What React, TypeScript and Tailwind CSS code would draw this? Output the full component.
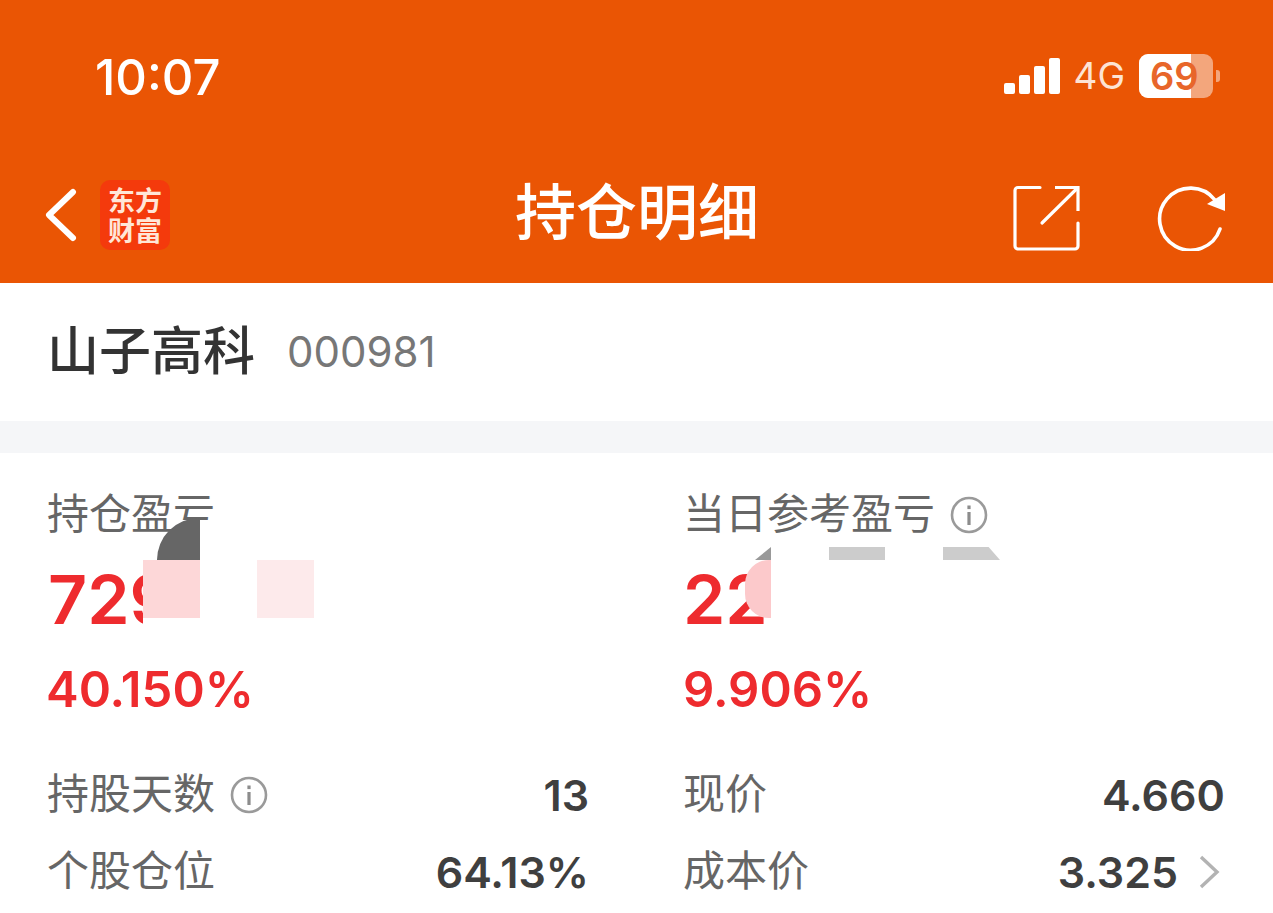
import React from 'react';

const CJK = "font-['Liberation_Sans','Noto_Sans_CJK_SC',sans-serif]";

function InfoIcon({ size = 38 }: { size?: number }) {
  return (
    <svg width={size} height={size} viewBox="0 0 38 38" fill="none" className="shrink-0">
      <circle cx="19" cy="19" r="17" stroke="#9a9a9a" strokeWidth="2.6" />
      <rect x="17.4" y="16" width="3.2" height="13" fill="#8c8c8c" />
      <rect x="17.4" y="9.5" width="3.2" height="3.6" fill="#8c8c8c" />
    </svg>
  );
}

function StatusBar() {
  return (
    <div className="h-[153px] flex items-start justify-between pl-[95px] pr-[53px] pt-[49px]">
      <span className="font-['Inter',sans-serif] text-[49px] leading-[58px] font-medium text-white">10:07</span>
      <div className="flex items-center -mt-[2px] pt-[7px]">
        <div className="flex items-end gap-[4px] h-[36px]">
          <div className="w-[11px] h-[11px] bg-white rounded-[2px]" />
          <div className="w-[11px] h-[19px] bg-white rounded-[2px]" />
          <div className="w-[11px] h-[28px] bg-white rounded-[2px]" />
          <div className="w-[11px] h-[36px] bg-white rounded-[2px]" />
        </div>
        <span className="ml-[13px] font-['Inter',sans-serif] text-[37px] leading-[44px] text-[#fde3d4]">4G</span>
        <div className="ml-[14px] relative w-[74px] h-[44px] rounded-[9px] bg-[#f3a67c]">
          <div className="absolute left-0 top-0 bottom-0 w-[52px] bg-white rounded-l-[9px]" />
          <span className="absolute left-[11px] top-0 font-['Inter',sans-serif] font-semibold text-[38px] leading-[44px] text-[#e8662a]">69</span>
        </div>
        <div className="ml-[3px] w-[4px] h-[12px] rounded-r-[3px] bg-[#f3a67c]" />
      </div>
    </div>
  );
}

function NavBar() {
  return (
    <div className="h-[130px] flex items-start justify-between pl-[44px] pr-[48px] pt-[25px]">
      <div className="flex items-start">
        <svg width="34" height="54" viewBox="0 0 34 54" fill="none" className="mt-[10px]">
          <path d="M29 4 L5 27 L29 50" stroke="white" strokeWidth="6" strokeLinecap="round" strokeLinejoin="round" />
        </svg>
        <div className="ml-[22px] mt-[2px] w-[70px] h-[70px] rounded-[10px] bg-[#f43a0c] flex items-center justify-center">
          <span className="w-[54px] text-center font-['Noto_Sans_CJK_SC',serif] text-[27px] leading-[30px] font-bold text-[#ffe6d8]">东方财富</span>
        </div>
      </div>
      <span className={`absolute left-[515px] top-[176px] ${CJK} text-[61px] leading-[76px] font-medium text-white`}>持仓明细</span>
      <div className="flex items-start gap-[77px] pt-[7px]">
        <svg width="68" height="66" viewBox="0 0 68 66" fill="none">
          <path d="M28 2.5 H6 a3 3 0 0 0 -3 3 V61 a3 3 0 0 0 3 3 H63 a3 3 0 0 0 3 -3 V38" stroke="white" strokeWidth="3.2" strokeLinecap="round" />
          <path d="M43 2.5 H66 V26" stroke="white" strokeWidth="3.2" fill="none" />
          <path d="M65 3.5 L30 38" stroke="white" strokeWidth="3.2" strokeLinecap="round" />
        </svg>
        <svg width="68" height="66" viewBox="0 0 68 66" fill="none">
          <path d="M58 15 A31 31 0 1 0 63 44" stroke="white" strokeWidth="3.6" strokeLinecap="round" />
          <path d="M68 8 V26 L50 19 Z" fill="white" />
        </svg>
      </div>
    </div>
  );
}

function Row({ label, value, info, chevron }: { label: string; value: string; info?: boolean; chevron?: boolean }) {
  return (
    <div className="flex items-center justify-between h-[77px]">
      <div className="flex items-center gap-[15px] -ml-px">
        <span className={`${CJK} text-[42px] leading-[50px] text-[#666666]`}>{label}</span>
        {info && <InfoIcon />}
      </div>
      <div className="flex items-center">
        <span className="font-['Inter',sans-serif] font-semibold text-[43px] leading-[50px] text-[#3f3f3f]">{value}</span>
        {chevron && (
          <svg width="22" height="34" viewBox="0 0 22 34" fill="none" className="ml-[20px] mr-[5px]">
            <path d="M3 2 L19 17 L3 32" stroke="#b3b3b3" strokeWidth="3.4" />
          </svg>
        )}
      </div>
    </div>
  );
}

export default function App() {
  return (
    <div className="relative w-[1273px] h-[913px] overflow-hidden bg-white">
      <div className="bg-[#ea5504]">
        <StatusBar />
        <NavBar />
      </div>

      <div className="h-[138px] flex items-center pl-[47px]">
        <span className={`${CJK} text-[52px] leading-[60px] font-medium text-[#333333]`}>山子高科</span>
        <span className="ml-[32px] font-['Inter',sans-serif] text-[42px] leading-[50px] text-[#777777]">000981</span>
      </div>
      <div className="h-[32px] bg-[#f5f6f8]" />

      <div className="grid grid-cols-[1fr_1fr] gap-[95px] pl-[48px] pr-[48px] pt-[36px]">
        <div>
          <div className={`${CJK} text-[42px] leading-[52px] text-[#666666] -ml-px`}>持仓盈亏</div>
          <div className="font-['Inter',sans-serif] font-semibold text-[68px] leading-[80px] text-[#ee2b2e] mt-[18px]">729</div>
          <div className="font-['Inter',sans-serif] font-semibold text-[49px] leading-[56px] text-[#ee2b2e] mt-[23px] -ml-[2px]">40.150%</div>
          <div className="mt-[38px]">
            <Row label="持股天数" value="13" info />
            <Row label="个股仓位" value="64.13%" />
          </div>
        </div>
        <div>
          <div className="flex items-center gap-[15px] -ml-px">
            <span className={`${CJK} text-[42px] leading-[52px] text-[#666666]`}>当日参考盈亏</span>
            <InfoIcon />
          </div>
          <div className="font-['Inter',sans-serif] font-semibold text-[68px] leading-[80px] text-[#ee2b2e] mt-[18px] -ml-px">22</div>
          <div className="font-['Inter',sans-serif] font-semibold text-[49px] leading-[56px] text-[#ee2b2e] mt-[23px] -ml-px">9.906%</div>
          <div className="mt-[38px]">
            <Row label="现价" value="4.660" />
            <Row label="成本价" value="3.325" chevron />
          </div>
        </div>
      </div>

      {/* smudges over the blanked-out amounts */}
      <div className="absolute left-[200px] top-[520px] w-[130px] h-[100px] bg-white" />
      <div className="absolute left-[143px] top-[618px] w-[57px] h-[12px] bg-white" />
      <div className="absolute left-[157px] top-[518px] w-[43px] h-[42px] bg-[#666666] rounded-tl-[43px]" />
      <div className="absolute left-[143px] top-[560px] w-[57px] h-[58px] bg-[#fdd7d8]" />
      <div className="absolute left-[257px] top-[560px] w-[57px] h-[58px] bg-[#fdeaeb]" />

      <div className="absolute left-[755px] top-[547px] w-[16px] h-[13px] bg-[#999999] [clip-path:polygon(100%_0,100%_100%,0_100%)]" />
      <div className="absolute left-[745px] top-[560px] w-[26px] h-[58px] bg-[#fcc9cb] rounded-l-[24px]" />
      <div className="absolute left-[829px] top-[547px] w-[56px] h-[13px] bg-[#cccccc]" />
      <div className="absolute left-[943px] top-[547px] w-[57px] h-[13px] bg-[#cccccc] [clip-path:polygon(0_0,80%_0,100%_100%,0_100%)]" />
    </div>
  );
}
